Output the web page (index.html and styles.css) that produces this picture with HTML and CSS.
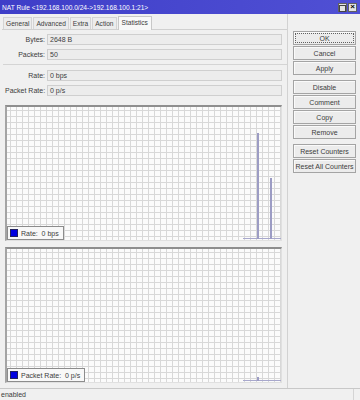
FILE: index.html
```html
<!DOCTYPE html>
<html lang="en">
<head>
    <meta charset="UTF-8">
    <title>NAT Rule</title>
    <link rel="stylesheet" href="styles.css">
</head>
<body>
    <div class="window">
        <div class="titlebar">
            <span class="title">NAT Rule &lt;192.168.100.0/24-&gt;192.168.100.1:21&gt;</span>
            <div class="title-buttons">
                <span class="tbtn max"></span>
                <span class="tbtn close">&#215;</span>
            </div>
        </div>

        <div class="content">
            <div class="main">
                <div class="tabs">
                    <span class="tab">General</span>
                    <span class="tab">Advanced</span>
                    <span class="tab">Extra</span>
                    <span class="tab">Action</span>
                    <span class="tab active">Statistics</span>
                </div>

                <div class="panel">
                    <div class="row">
                        <label>Bytes:</label>
                        <div class="field">2648 B</div>
                    </div>
                    <div class="row">
                        <label>Packets:</label>
                        <div class="field">50</div>
                    </div>
                    <div class="sep"></div>
                    <div class="row">
                        <label>Rate:</label>
                        <div class="field">0 bps</div>
                    </div>
                    <div class="row">
                        <label>Packet Rate:</label>
                        <div class="field">0 p/s</div>
                    </div>

                    <div class="graph graph-rate">
                        <div class="baseline"></div>
                        <div class="spike" style="left: 250px; height: 106px;"></div>
                        <div class="spike" style="left: 263px; height: 61px;"></div>
                        <div class="legend"><span class="swatch"></span>Rate:&nbsp; 0 bps</div>
                    </div>

                    <div class="graph graph-packets">
                        <div class="baseline"></div>
                        <div class="spike" style="left: 250px; height: 4px;"></div>
                        <div class="legend"><span class="swatch"></span>Packet Rate:&nbsp; 0 p/s</div>
                    </div>
                </div>
            </div>

            <div class="side">
                <button class="focus">OK</button>
                <button>Cancel</button>
                <button>Apply</button>
                <button class="gap">Disable</button>
                <button>Comment</button>
                <button>Copy</button>
                <button>Remove</button>
                <button class="gap">Reset Counters</button>
                <button>Reset All Counters</button>
            </div>
        </div>

        <div class="statusbar">
            <span>enabled</span>
            <span class="status-cell"></span>
        </div>
    </div>
</body>
</html>
```

FILE: styles.css
```css
* {
    margin: 0;
    padding: 0;
    box-sizing: border-box;
}

body {
    width: 360px;
    height: 400px;
    background: #f0f0f0;
    font-family: "Liberation Sans", Arial, sans-serif;
    font-size: 7px;
    color: #3c3c3c;
    overflow: hidden;
}

.window {
    display: flex;
    flex-direction: column;
    width: 360px;
    height: 400px;
}

/* title bar */
.titlebar {
    height: 14px;
    background: linear-gradient(to right, #3e3ec8, #5050d4);
    color: #fff;
    display: flex;
    align-items: center;
    justify-content: space-between;
    padding: 0 3px 0 2px;
}

.title {
    font-size: 6.6px;
}

.title-buttons {
    display: flex;
    gap: 1px;
}

.tbtn {
    width: 9px;
    height: 9px;
    background: #e4e4e4;
    border: 1px solid #606060;
    color: #000;
    font-size: 8px;
    line-height: 6px;
    text-align: center;
    font-weight: bold;
}

.tbtn.max::after {
    content: "";
    display: block;
    width: 5px;
    height: 5px;
    margin: 1px auto 0;
    border: 1px solid #444;
}

/* body */
.content {
    flex: 1;
    display: flex;
}

.main {
    width: 288px;
    border-right: 1px solid #d2d2d2;
    padding: 1px 0 0 2px;
    display: flex;
    flex-direction: column;
}

.tabs {
    display: flex;
    align-items: flex-end;
    height: 15px;
    padding-left: 1px;
    border-bottom: 1px solid #d0d0d0;
}

.tab {
    height: 12px;
    padding: 0 2px;
    line-height: 11px;
    font-size: 6.6px;
    border: 1px solid #d4d4d4;
    border-bottom: none;
    background: #ececec;
    margin-right: 1px;
}

.tab.active {
    height: 14px;
    background: #f8f8f8;
    border-color: #c8c8c8;
    margin-bottom: -1px;
    padding: 0 3px;
    line-height: 12px;
}

.panel {
    flex: 1;
    display: flex;
    flex-direction: column;
    padding: 3px 5px 3px 3px;
}

.row {
    display: flex;
    align-items: center;
    height: 12px;
    margin-bottom: 3px;
}

.row label {
    width: 41px;
    text-align: right;
    padding-right: 1px;
    white-space: nowrap;
    flex-shrink: 0;
}

.field {
    flex: 1;
    height: 11px;
    margin-left: 1px;
    border: 1px solid #cfcfcf;
    background: #ececec;
    padding-left: 2px;
    line-height: 9px;
}

.sep {
    height: 1px;
    background: #d4d4d4;
    margin: 1px -5px 4px -2px;
}

/* graphs */
.graph {
    position: relative;
    height: 136px;
    border-top: 2px solid #8e8e8e;
    border-left: 2px solid #a4a4a4;
    border-right: 1px solid #e0e0e0;
    border-bottom: 1px solid #e0e0e0;
    background-color: #fbfbfb;
    background-image:
        linear-gradient(to right, #d8d8d8 1px, transparent 1px),
        linear-gradient(to bottom, #d8d8d8 1px, transparent 1px);
    background-size: 6px 6px;
    background-position: 3px 3px;
    margin-top: 6px;
}

.baseline {
    position: absolute;
    left: 236px;
    right: 0;
    bottom: 1px;
    height: 1px;
    background: #a8a8cc;
}

.spike {
    position: absolute;
    bottom: 1px;
    width: 2px;
    background: #9c9cc4;
}

.legend {
    position: absolute;
    left: 0;
    bottom: 0;
    height: 14px;
    padding: 0 4px 0 2px;
    border: 1px solid #8c8c8c;
    background: #f8f8f8;
    display: flex;
    align-items: center;
    gap: 3px;
}

.swatch {
    width: 8px;
    height: 8px;
    background: #0000e0;
    border: 1px solid #202060;
}

/* buttons */
.side {
    flex: 1;
    display: flex;
    flex-direction: column;
    padding: 17px 4px 0 5px;
    gap: 1px;
}

.side button {
    height: 14px;
    font-family: inherit;
    font-size: 7px;
    color: #3c3c3c;
    background: #ececec;
    border: 1px solid #a4a4a4;
    box-shadow: inset 1px 1px 0 #fafafa;
}

.side button.focus {
    outline: 1px dotted #606060;
    outline-offset: -3px;
}

.side button.gap {
    margin-top: 4px;
}

/* status bar */
.statusbar {
    height: 12px;
    border-top: 1px solid #c8c8c8;
    display: flex;
    align-items: center;
    justify-content: space-between;
    padding-left: 1px;
}

.status-cell {
    width: 7px;
    height: 100%;
    border-left: 1px solid #d4d4d4;
}
```
